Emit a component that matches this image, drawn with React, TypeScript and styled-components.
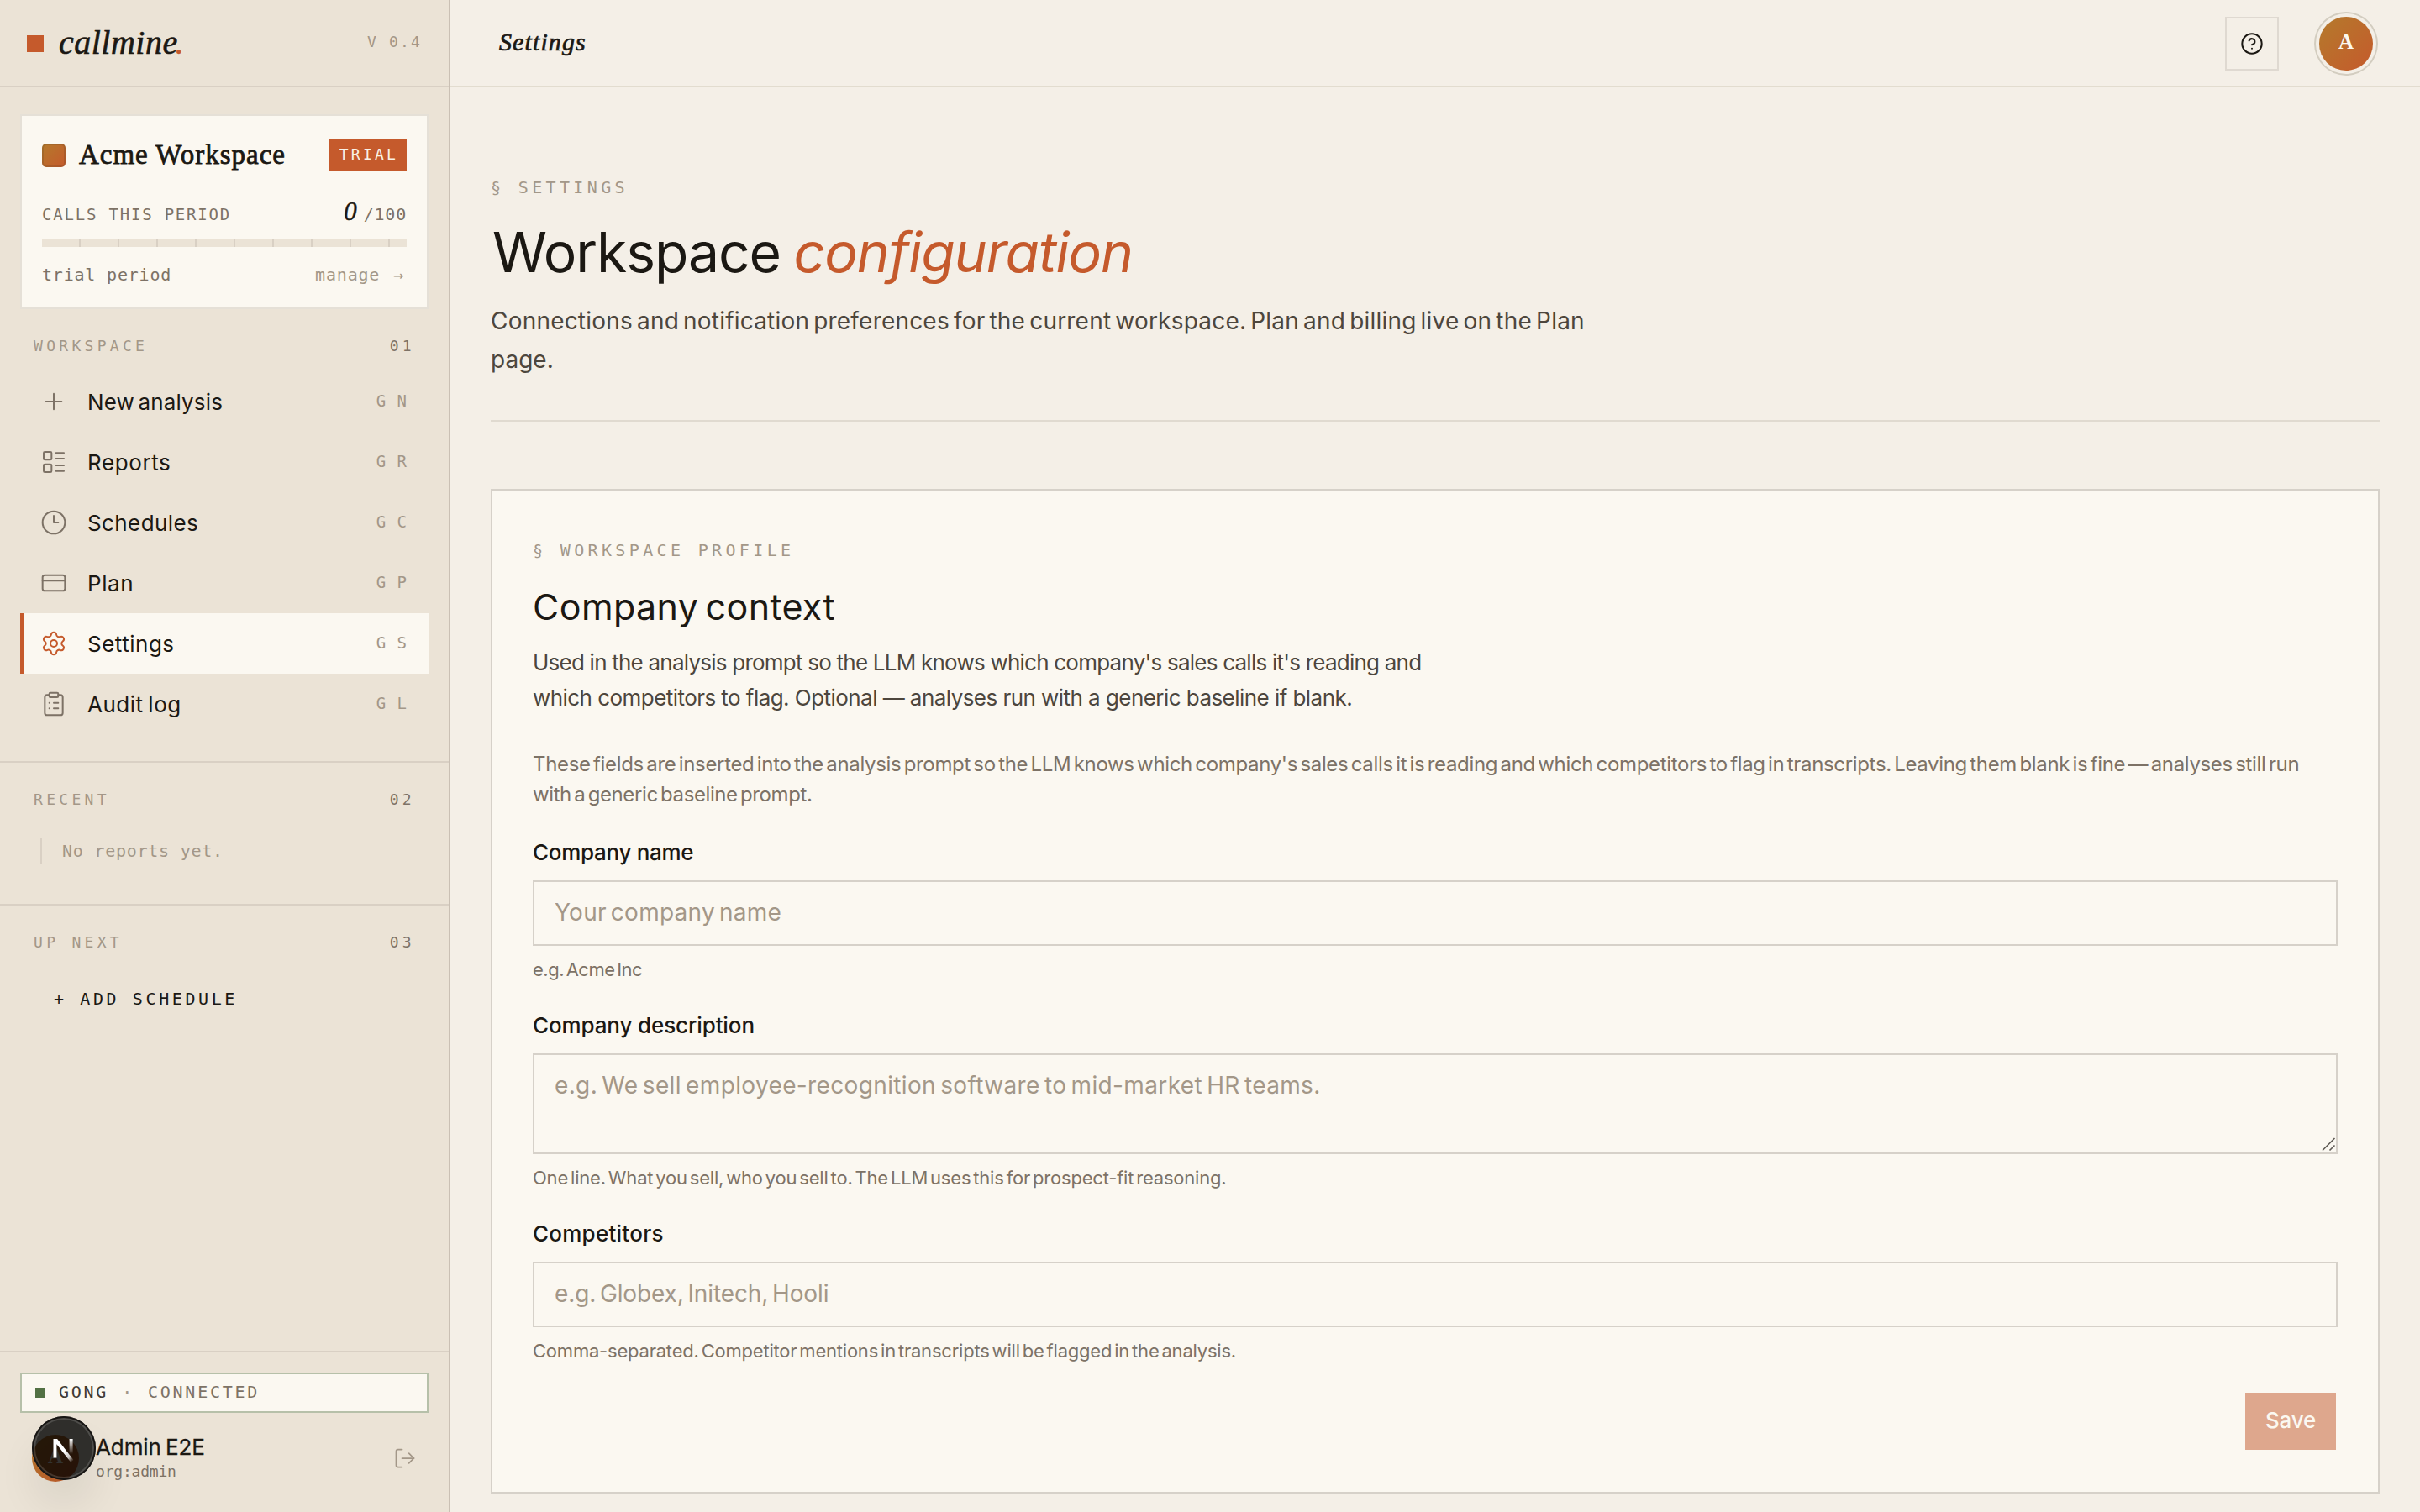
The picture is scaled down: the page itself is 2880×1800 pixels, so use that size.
import React from "react";
import styled, { createGlobalStyle, css } from "styled-components";
import {
  Plus,
  LayoutList,
  CreditCard,
  Settings,
  ClipboardList,
  LogOut,
  CircleQuestionMark,
} from "lucide-react";

const ink = "#1b1813";
const inkSoft = "#4d463d";
const muted = "#7d7266";
const faint = "#a39788";
const rust = "#c55a2c";
const ochre = "#b47a2c";
const paper = "#fbf8f1";
const page = "#f4efe7";
const side = "#ebe3d6";
const rule = "#d9d0c4";

const sans = `Inter, "Liberation Sans", sans-serif`;
const serif = `"Liberation Serif", "Times New Roman", serif`;
const mono = `"DejaVu Sans Mono", "Liberation Mono", monospace`;

const GlobalStyle = createGlobalStyle`
  *, *::before, *::after { box-sizing: border-box; }
  html, body { margin: 0; padding: 0; background: ${page}; }
  body { font-family: ${sans}; color: ${ink}; overflow: hidden; }
  h1, h2, p { margin: 0; font-weight: 400; }
`;

const Shell = styled.div`
  display: grid;
  grid-template-columns: 536px 1fr;
  width: 2880px;
  height: 1800px;
  overflow: hidden;
`;

/* ---------- sidebar ---------- */

const Sidebar = styled.aside`
  display: flex;
  flex-direction: column;
  background: ${side};
  border-right: 2px solid #cac0b4;
`;

const Brand = styled.div`
  display: flex;
  align-items: center;
  height: 104px;
  padding: 0 32px 0 32px;
  border-bottom: 2px solid ${rule};
`;

const BrandMark = styled.span`
  width: 20px;
  height: 20px;
  margin-top: 2px;
  background: ${rust};
`;

const BrandName = styled.span`
  margin-left: 18px;
  font: italic 400 40px/50px ${serif};
  letter-spacing: 0.5px;
  -webkit-text-stroke: 0.6px currentColor;
  em {
    color: ${rust};
    margin-left: -3px;
  }
`;

const Version = styled.span`
  margin-left: auto;
  margin-top: -2px;
  font: 18px/24px ${mono};
  letter-spacing: 2.16px;
  color: ${faint};
`;

const PlanCard = styled.section`
  margin: 32px 24px 0;
  padding: 28px 24px 27px;
  background: ${paper};
  border: 2px solid #e5e0d7;
`;

const CardRow = styled.div<{ $height: number; $top?: number; $align?: string }>`
  display: flex;
  justify-content: space-between;
  align-items: ${(p) => p.$align ?? "center"};
  height: ${(p) => p.$height}px;
  margin-top: ${(p) => p.$top ?? 0}px;
`;

const Swatch = styled.span`
  width: 28px;
  height: 28px;
  border-radius: 5px;
  border: 2px solid rgba(60, 50, 30, 0.16);
  background: linear-gradient(135deg, ${ochre}, ${rust}) border-box;
`;

const OrgName = styled.span`
  margin: -3px auto 0 16px;
  font: 400 33px/38px ${serif};
  letter-spacing: 0.98px;
  -webkit-text-stroke: 0.8px currentColor;
`;

const TrialTag = styled.span`
  height: 38px;
  padding: 0 10px 0 12px;
  background: ${rust};
  color: #f9f1e6;
  font: 18px/36px ${mono};
  letter-spacing: 3.2px;
`;

const MeterLabel = styled.span`
  font: 19px/28px ${mono};
  letter-spacing: 1.8px;
  color: ${muted};
`;

const MeterValue = styled.span`
  display: inline-flex;
  align-items: baseline;
  gap: 6px;
  font: 20px/28px ${mono};
  letter-spacing: 0.8px;
  color: ${muted};
  b {
    font: italic 400 31px/28px ${serif};
    color: ${ink};
    margin-right: 1px;
    -webkit-text-stroke: 0.4px currentColor;
  }
`;

const Meter = styled.div`
  height: 10px;
  margin-top: 18px;
  background: repeating-linear-gradient(
    90deg,
    ${side} 0 44px,
    ${rule} 44px 46px
  );
`;

const Small = styled.span<{ $tone: string }>`
  font: 20px/24px ${mono};
  letter-spacing: 0.8px;
  color: ${(p) => p.$tone};
`;

const Arrow = styled.span`
  display: inline-block;
  width: 19px;
  text-align: center;
`;

const Group = styled.section<{ $first?: boolean; $bottom: number }>`
  padding: 34px 24px ${(p) => p.$bottom}px;
  ${(p) =>
    !p.$first &&
    css`
      border-top: 2px solid ${rule};
    `}
`;

const GroupHead = styled.div`
  display: flex;
  justify-content: space-between;
  padding: 0 16px;
  font: 18px/20px ${mono};
  letter-spacing: 4.3px;
  color: ${faint};
  span:last-child {
    color: ${muted};
  }
`;

const Nav = styled.nav`
  display: flex;
  flex-direction: column;
  margin-top: 20px;
`;

const NavItem = styled.a<{ $active?: boolean }>`
  display: flex;
  align-items: center;
  height: 72px;
  padding: 0 25px 0 20px;
  border-left: 4px solid ${(p) => (p.$active ? rust : "transparent")};
  background: ${(p) => (p.$active ? paper : "transparent")};
  svg {
    width: 32px;
    height: 32px;
    color: ${(p) => (p.$active ? rust : muted)};
  }
`;

const NavLabel = styled.span<{ $track: number; $word?: number }>`
  flex: 1;
  margin: 2px 0 0 24px;
  font: 400 26px/36px ${sans};
  letter-spacing: ${(p) => p.$track}px;
  word-spacing: ${(p) => p.$word ?? 0}px;
`;

const Keys = styled.kbd`
  font: 19px/24px ${mono};
  letter-spacing: 0.95px;
  color: ${faint};
  margin-top: -2px;
`;

const EmptyNote = styled.p`
  margin: 36px 0 0 24px;
  padding-left: 24px;
  border-left: 2px solid ${rule};
  font: 20px/30px ${mono};
  letter-spacing: 0.75px;
  color: ${faint};
`;

const AddButton = styled.button`
  display: block;
  margin: 45px 0 0 40px;
  padding: 0;
  border: 0;
  background: none;
  font: 20px/24px ${mono};
  letter-spacing: 3.6px;
  color: ${ink};
`;

const SideFoot = styled.footer`
  margin-top: auto;
  height: 192px;
  padding: 24px 24px 0;
  border-top: 2px solid ${rule};
`;

const Integration = styled.div`
  display: flex;
  align-items: center;
  gap: 16px;
  height: 48px;
  padding: 0 16px 2px;
  border: 2px solid #b6c0a9;
  background: ${paper};
  font: 20px/24px ${mono};
  letter-spacing: 2.75px;
  color: ${muted};
  i {
    width: 12px;
    height: 12px;
    margin-top: 2px;
    background: #527043;
  }
  b {
    font-weight: 400;
    color: #403a33;
  }
  u {
    text-decoration: none;
    color: ${faint};
  }
`;

const UserRow = styled.div`
  position: relative;
  display: flex;
  align-items: center;
  height: 56px;
  margin-top: 26px;
  padding: 0 14px;
  & > svg {
    margin-left: auto;
    color: ${faint};
  }
`;

const Avatar = styled.span<{ $size: number; $ring?: boolean }>`
  display: flex;
  align-items: center;
  justify-content: center;
  width: ${(p) => p.$size}px;
  height: ${(p) => p.$size}px;
  border-radius: 50%;
  background: linear-gradient(135deg, ${ochre}, ${rust});
  color: ${paper};
  font: 700 25px/30px ${serif};
  ${(p) =>
    p.$ring &&
    css`
      box-shadow: 0 0 0 4px ${page}, 0 0 0 6px #d3cdc0;
    `}
  span {
    margin-top: -5px;
  }
`;

const DevBadge = styled.div`
  position: absolute;
  left: 14px;
  top: -22px;
  width: 76px;
  height: 76px;
  border-radius: 50%;
  background: rgba(0, 0, 0, 0.8);
  box-shadow: inset 0 0 0 2px #171513, inset 0 0 0 4px rgba(255, 255, 255, 0.15),
    0 32px 48px rgba(0, 0, 0, 0.07);
  svg {
    display: block;
    width: 76px;
    height: 76px;
  }
`;

const UserText = styled.div`
  display: flex;
  flex-direction: column;
  margin: -3px 0 0 20px;
`;

const UserName = styled.span`
  font: 400 26px/32px ${sans};
  letter-spacing: -0.1px;
  word-spacing: -2px;
  -webkit-text-stroke: 0.3px currentColor;
`;

const UserRole = styled.span`
  margin-top: 3px;
  font: 18px/20px ${mono};
  letter-spacing: -0.2px;
  color: ${muted};
`;

/* ---------- main column ---------- */

const Main = styled.main`
  min-width: 0;
  background: ${page};
`;

const TopBar = styled.header`
  display: flex;
  align-items: center;
  height: 104px;
  padding: 0 56px 0 58px;
  border-bottom: 2px solid #e2dccf;
`;

const Crumb = styled.span`
  margin: -2px auto 0 0;
  font: italic 400 30px/36px ${serif};
  letter-spacing: 1.1px;
  -webkit-text-stroke: 0.7px currentColor;
`;

const HelpButton = styled.button`
  display: flex;
  align-items: center;
  justify-content: center;
  width: 64px;
  height: 64px;
  margin: 2px 48px 0 0;
  padding: 0;
  border: 2px solid #dfd9d1;
  background: none;
  color: ${ink};
`;

const TopAvatar = styled.div`
  margin-top: 2px;
`;

const Content = styled.div`
  padding: 107px 48px 0;
`;

const Eyebrow = styled.div`
  font: 20px/24px ${mono};
  letter-spacing: 4.35px;
  color: ${faint};
`;

const PageTitle = styled.h1`
  margin: 29px 0 0 2px;
  font: 400 66px/72px ${sans};
  letter-spacing: -1.05px;
  white-space: nowrap;
  word-spacing: -2px;
  em {
    color: ${rust};
  }
`;

const Line = styled.span<{ $track: number; $word: number }>`
  display: block;
  white-space: nowrap;
  letter-spacing: ${(p) => p.$track}px;
  word-spacing: ${(p) => p.$word}px;
`;

const Lead = styled.p`
  margin-top: 23px;
  font: 400 28px/46.4px ${sans};
  color: ${inkSoft};
`;

const Divider = styled.hr`
  height: 2px;
  margin: 48px 0 80px;
  border: 0;
  background: #e0dad0;
`;

const Card = styled.section`
  height: 1196px;
  padding: 59px 48px 0;
  border: 2px solid #d6d1c9;
  background: ${paper};
`;

const CardTitle = styled.h2`
  margin-top: 29px;
  font: 400 43px/52px ${sans};
  letter-spacing: 0.35px;
  word-spacing: -4px;
`;

const CardLead = styled.p`
  margin-top: 20px;
  font: 400 26px/42px ${sans};
  color: ${inkSoft};
`;

const CardNote = styled.p`
  margin: 40px 0 35px;
  font: 400 24px/36px ${sans};
  color: ${muted};
`;

const Field = styled.label`
  display: block;
  margin-bottom: 36px;
`;

const FieldLabel = styled.span<{ $track: number }>`
  display: block;
  font: 500 26px/32px ${sans};
  letter-spacing: ${(p) => p.$track}px;
  color: ${ink};
`;

const controlStyles = css<{ $track: number; $word: number }>`
  display: block;
  width: 100%;
  margin-top: 17px;
  border: 2px solid #d6d1c9;
  border-radius: 0;
  background: ${paper};
  font: 400 28px/44px ${sans};
  letter-spacing: ${(p) => p.$track}px;
  word-spacing: ${(p) => p.$word}px;
  outline: 0;
  &::placeholder {
    color: ${faint};
    opacity: 1;
  }
`;

const Input = styled.input<{ $track: number; $word: number }>`
  ${controlStyles}
  height: 78px;
  padding: 0 24px 2px;
`;

const AreaWrap = styled.div`
  position: relative;
`;

const TextArea = styled.textarea<{ $track: number; $word: number }>`
  ${controlStyles}
  height: 120px;
  padding: 14px 24px;
  resize: none;
  overflow: hidden;
`;

const Grip = styled.svg`
  position: absolute;
  right: 2px;
  bottom: 2px;
  width: 18px;
  height: 18px;
`;

const Hint = styled.span<{ $track: number; $word: number }>`
  display: block;
  margin-top: 13px;
  font: 400 22px/30px ${sans};
  letter-spacing: ${(p) => p.$track}px;
  word-spacing: ${(p) => p.$word}px;
  color: ${muted};
`;

const Actions = styled.div`
  display: flex;
  justify-content: flex-end;
  margin-top: -1px;
  padding-right: 2px;
`;

const SaveButton = styled.button`
  width: 108px;
  height: 68px;
  padding: 0 0 2px;
  border: 0;
  background: #dea78d;
  color: ${paper};
  font: 500 26px/32px ${sans};
  letter-spacing: -0.2px;
`;

const ClockIcon = () => (
  <svg
    viewBox="0 0 24 24"
    fill="none"
    stroke="currentColor"
    strokeWidth={1.5}
    strokeLinecap="round"
    strokeLinejoin="round"
  >
    <circle cx="12" cy="12" r="10" />
    <path d="M12 6v6h4" />
  </svg>
);

const NextMark = () => (
  <svg viewBox="0 0 76 76" fill="none">
    <defs>
      <linearGradient id="diag" x1="38" y1="42" x2="48" y2="54" gradientUnits="userSpaceOnUse">
        <stop stopColor="#fff" />
        <stop offset="0.6" stopColor="#fff" stopOpacity="0.75" />
        <stop offset="1" stopColor="#fff" stopOpacity="0" />
      </linearGradient>
      <linearGradient id="stem" x1="46" y1="27" x2="46" y2="45" gradientUnits="userSpaceOnUse">
        <stop stopColor="#fff" />
        <stop offset="1" stopColor="#fff" stopOpacity="0" />
      </linearGradient>
    </defs>
    <path d="M25.5 27h4.6L49.6 52.2 46.4 55 29.4 33.2V49.5H25.5z" fill="url(#diag)" />
    <rect x="44.6" y="27" width="4" height="18" fill="url(#stem)" />
  </svg>
);

const stroke = { strokeWidth: 1.5 };

const navItems = [
  { label: "New analysis", keys: "G N", icon: <Plus {...stroke} />, track: 0.15, word: -3 },
  { label: "Reports", keys: "G R", icon: <LayoutList {...stroke} />, track: 0.6 },
  { label: "Schedules", keys: "G C", icon: <ClockIcon />, track: 0.4 },
  { label: "Plan", keys: "G P", icon: <CreditCard {...stroke} />, track: 0.6 },
  { label: "Settings", keys: "G S", icon: <Settings {...stroke} />, track: 0.5, active: true },
  { label: "Audit log", keys: "G L", icon: <ClipboardList {...stroke} />, track: 0.5, word: -2 },
];

export default function App() {
  return (
    <>
      <GlobalStyle />
      <Shell>
        <Sidebar>
          <Brand>
            <BrandMark />
            <BrandName>
              callmine<em>.</em>
            </BrandName>
            <Version>V 0.4</Version>
          </Brand>

          <PlanCard>
            <CardRow $height={38}>
              <Swatch />
              <OrgName>Acme Workspace</OrgName>
              <TrialTag>TRIAL</TrialTag>
            </CardRow>
            <CardRow $height={28} $top={34} $align="baseline">
              <MeterLabel>CALLS THIS PERIOD</MeterLabel>
              <MeterValue>
                <b>0</b>/100
              </MeterValue>
            </CardRow>
            <Meter />
            <CardRow $height={24} $top={21}>
              <Small $tone={muted}>trial period</Small>
              <Small $tone={faint}>
                manage <Arrow>→</Arrow>
              </Small>
            </CardRow>
          </PlanCard>

          <Group $first $bottom={32}>
            <GroupHead>
              <span>WORKSPACE</span>
              <span>01</span>
            </GroupHead>
            <Nav>
              {navItems.map((item) => (
                <NavItem key={item.label} $active={item.active}>
                  {item.icon}
                  <NavLabel $track={item.track} $word={item.word}>
                    {item.label}
                  </NavLabel>
                  <Keys>{item.keys}</Keys>
                </NavItem>
              ))}
            </Nav>
          </Group>

          <Group $bottom={48}>
            <GroupHead>
              <span>RECENT</span>
              <span>02</span>
            </GroupHead>
            <EmptyNote>No reports yet.</EmptyNote>
          </Group>

          <Group $bottom={0}>
            <GroupHead>
              <span>UP NEXT</span>
              <span>03</span>
            </GroupHead>
            <AddButton>+ ADD SCHEDULE</AddButton>
          </Group>

          <SideFoot>
            <Integration>
              <i />
              <b>GONG</b>
              <u>·</u>
              <span>CONNECTED</span>
            </Integration>
            <UserRow>
              <Avatar $size={56}>
                <span>A</span>
              </Avatar>
              <UserText>
                <UserName>Admin E2E</UserName>
                <UserRole>org:admin</UserRole>
              </UserText>
              <LogOut size={28} strokeWidth={1.5} />
              <DevBadge>
                <NextMark />
              </DevBadge>
            </UserRow>
          </SideFoot>
        </Sidebar>

        <Main>
          <TopBar>
            <Crumb>Settings</Crumb>
            <HelpButton>
              <CircleQuestionMark size={28} strokeWidth={1.75} />
            </HelpButton>
            <TopAvatar>
              <Avatar $size={64} $ring>
                <span>A</span>
              </Avatar>
            </TopAvatar>
          </TopBar>

          <Content>
            <Eyebrow>§ SETTINGS</Eyebrow>
            <PageTitle>
              Workspace <em>configuration</em>
            </PageTitle>
            <Lead>
              <Line $track={0.2} $word={-3}>
                Connections and notification preferences for the current workspace. Plan and billing live on the Plan
              </Line>
              <Line $track={0} $word={0}>
                page.
              </Line>
            </Lead>
            <Divider />

            <Card>
              <Eyebrow>§ WORKSPACE PROFILE</Eyebrow>
              <CardTitle>Company context</CardTitle>
              <CardLead>
                <Line $track={-0.77} $word={0}>
                  Used in the analysis prompt so the LLM knows which company's sales calls it's reading and
                </Line>
                <Line $track={-0.55} $word={0}>
                  which competitors to flag. Optional — analyses run with a generic baseline if blank.
                </Line>
              </CardLead>
              <CardNote>
                <Line $track={-0.34} $word={-3}>
                  These fields are inserted into the analysis prompt so the LLM knows which company's sales calls it is
                  reading and which competitors to flag in transcripts. Leaving them blank is fine — analyses still run
                </Line>
                <Line $track={-0.4} $word={-3}>
                  with a generic baseline prompt.
                </Line>
              </CardNote>

              <Field>
                <FieldLabel $track={-0.3}>Company name</FieldLabel>
                <Input $track={0.25} $word={-3} placeholder="Your company name" />
                <Hint $track={-0.5} $word={-3}>
                  e.g. Acme Inc
                </Hint>
              </Field>
              <Field>
                <FieldLabel $track={-0.12}>Company description</FieldLabel>
                <AreaWrap>
                  <TextArea
                    $track={0.36}
                    $word={-3}
                    placeholder="e.g. We sell employee-recognition software to mid-market HR teams."
                  />
                  <Grip viewBox="0 0 18 18" fill="none" stroke="#5f5b55" strokeWidth="1.6">
                    <path d="M2 15.5 16.5 1M10.5 15.5l6-6" />
                  </Grip>
                </AreaWrap>
                <Hint $track={-0.2} $word={-3}>
                  One line. What you sell, who you sell to. The LLM uses this for prospect-fit reasoning.
                </Hint>
              </Field>
              <Field>
                <FieldLabel $track={0.25}>Competitors</FieldLabel>
                <Input $track={-0.12} $word={-3} placeholder="e.g. Globex, Initech, Hooli" />
                <Hint $track={-0.21} $word={-3}>
                  Comma-separated. Competitor mentions in transcripts will be flagged in the analysis.
                </Hint>
              </Field>
              <Actions>
                <SaveButton>Save</SaveButton>
              </Actions>
            </Card>
          </Content>
        </Main>
      </Shell>
    </>
  );
}
